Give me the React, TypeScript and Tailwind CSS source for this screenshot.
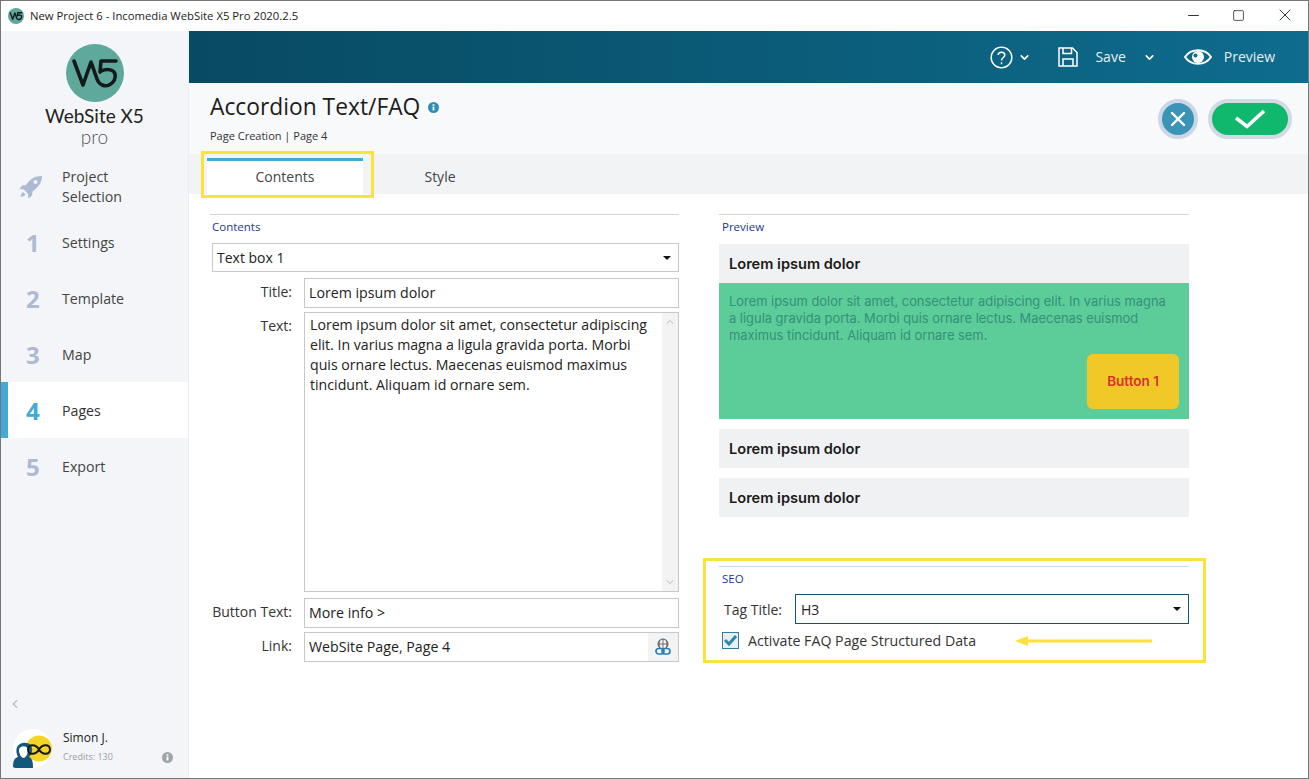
import { ChevronDown, ChevronLeft, ChevronUp, Minus, Square, X } from 'lucide-react';

const sans = "font-['Open_Sans','Noto_Sans',sans-serif]";

const steps = [
  { num: '1', label: 'Settings' },
  { num: '2', label: 'Template' },
  { num: '3', label: 'Map' },
  { num: '4', label: 'Pages', active: true },
  { num: '5', label: 'Export' },
];

const loremText =
  'Lorem ipsum dolor sit amet, consectetur adipiscing elit. In varius magna a ligula gravida porta. Morbi quis ornare lectus. Maecenas euismod maximus tincidunt. Aliquam id ornare sem.';

function LogoMark({ size, stroke }: { size: number; stroke: number }) {
  return (
    <svg width={size} height={size} viewBox="0 0 58 58">
      <circle cx="29" cy="29" r="29" fill="#5fa89c" />
      <path
        d="M8 17 L17 41 L25 18 L31 35 C33 41 39 43 43 41 C48 39 50 34 49 30 C48 26 42 24 35 27 L34 28 L35 17 L50 17"
        fill="none"
        stroke="#14191c"
        strokeWidth={stroke}
        strokeLinecap="round"
        strokeLinejoin="round"
      />
    </svg>
  );
}

function Avatar() {
  return (
    <svg width="39" height="39" viewBox="0 0 39 39">
      <circle cx="19.5" cy="19.5" r="19.5" fill="#ffffff" />
      <circle cx="26" cy="19.5" r="13" fill="#f5d327" />
      <path d="M0 38 C0 31 2 29 5 28 C2 22 3 15 10 14 C16 13 20 17 19 22 C19 25 17 27 16 28 C19 29 20 32 20 39 L2 39 Z" fill="#13577c" />
      <path d="M6 21 C6 16 15 16 15 21 C15 26 12 29 10.5 29 C9 29 6 26 6 21 Z" fill="#ffffff" />
      <path
        d="M26 20.5 C23 15 15 14.5 15 20.5 C15 26.5 23 26 26 20.5 C29 15 37 14.5 37 20.5 C37 26.5 29 26 26 20.5 Z"
        fill="none"
        stroke="#14191c"
        strokeWidth="2"
      />
    </svg>
  );
}

function Rocket() {
  return (
    <svg width="24" height="24" viewBox="0 0 24 24">
      <path d="M23 1 C16 1 11 4 7 10 L3 10.5 L0.5 14 L5 14.5 L9 19 L9.5 23.5 L13 20.5 L13.5 16.5 C20 12 23 7 23 1 Z" fill="#aeb9d4" />
      <circle cx="16.5" cy="7" r="2" fill="#f3f5f8" />
      <path d="M4 17 C2.5 18 2 20 1.5 22 C3.5 21.5 5.5 21 6.5 19.5 Z" fill="#aeb9d4" />
    </svg>
  );
}

function InfoDot({ size, color }: { size: number; color: string }) {
  return (
    <svg width={size} height={size} viewBox="0 0 12 12">
      <circle cx="6" cy="6" r="6" fill={color} />
      <rect x="5" y="5" width="2" height="4.2" fill="#ffffff" />
      <rect x="5" y="2.4" width="2" height="1.7" fill="#ffffff" />
    </svg>
  );
}

function Caret() {
  return <span className="h-0 w-0 border-x-[4px] border-t-[4px] border-x-transparent border-t-[#111]" />;
}

function FieldRow({ label, children }: { label: string; children: React.ReactNode }) {
  return (
    <div className="flex items-start">
      <div className="w-[82px] shrink-0 pt-[4px] text-right text-[14px] leading-[20px] text-[#333]">{label}</div>
      <div className="ml-[12px] flex-1">{children}</div>
    </div>
  );
}

function InputBox({ value, right }: { value: string; right?: React.ReactNode }) {
  return (
    <div className="flex h-[30px] items-center justify-between border border-[#c8c8c8] bg-white pl-[4px] text-[14.2px] text-[#222]">
      <span>{value}</span>
      {right}
    </div>
  );
}

function SectionTitle({ title, inset }: { title: string; inset?: boolean }) {
  return (
    <div className={`border-t border-[#d4d6dc] pt-[4px] text-[11.5px] leading-[16px] text-[#1b3a8a] ${inset ? 'pl-[3px]' : 'pl-[2px]'}`}>
      {title}
    </div>
  );
}

function AccordionHead() {
  return (
    <div className="flex h-[39px] items-center bg-[#f0f1f3] pl-[10px] pt-[2px] font-['Inter',sans-serif] text-[14.6px] font-semibold text-[#1a1a1a]">
      Lorem ipsum dolor
    </div>
  );
}

export default function App() {
  return (
    <div className={`${sans} flex h-[779px] w-[1309px] flex-col overflow-hidden border border-[#777] bg-white`}>
      {/* Title bar */}
      <div className="flex h-[30px] shrink-0 items-center bg-white pl-[7px] text-[11.3px] text-[#222]">
        <LogoMark size={16} stroke={5} />
        <span className="ml-[6px] flex-1">New Project 6 - Incomedia WebSite X5 Pro 2020.2.5</span>
        <div className="flex items-center gap-[30px] pb-[2px] pr-[13px] text-[#111]">
          <Minus size={17} strokeWidth={1.2} />
          <Square size={13} strokeWidth={1.3} />
          <X size={20} strokeWidth={1} />
        </div>
      </div>

      <div className="flex min-h-0 flex-1">
        {/* Sidebar */}
        <aside className="flex w-[188px] shrink-0 flex-col border-r border-[#e8eef2] bg-[#f3f5f8]">
          <div className="flex flex-col items-center pt-[13px]">
            <LogoMark size={58} stroke={3.6} />
            <div className="mt-[4px] font-['Lato',sans-serif] text-[19px] leading-[20px] text-[#222]">WebSite X5</div>
            <div className="mt-[2px] font-['Lato',sans-serif] text-[19px] font-light leading-[18px] text-[#555]">pro</div>
          </div>
          <div className="mt-[13px] flex h-[55px] items-center pl-[18px] pt-[1px]">
            <Rocket />
            <div className="ml-[19px] text-[14.2px] leading-[20px] text-[#444]">
              Project
              <br />
              Selection
            </div>
          </div>
          {steps.map(step => (
            <div
              key={step.num}
              className={`flex h-[56px] items-center pt-[2px] ${step.active ? 'border-l-[7px] border-[#43a9d6] bg-white pl-[18px]' : 'pl-[25px]'}`}
            >
              <span className={`w-[36px] text-[24px] font-bold ${step.active ? 'text-[#43a9d6]' : 'text-[#aeb9d4]'}`}>{step.num}</span>
              <span className={`text-[14.2px] ${step.active ? 'font-medium text-[#333]' : 'text-[#444]'}`}>{step.label}</span>
            </div>
          ))}
          <div className="mt-auto pl-[7px]">
            <ChevronLeft size={14} className="text-[#b4b8bd]" />
          </div>
          <div className="flex items-start pb-[10px] pl-[12px] pr-[15px] pt-[18px]">
            <Avatar />
            <div className="ml-[11px] flex-1 pt-[1px]">
              <div className="text-[12px] font-medium leading-[16px] text-[#222]">Simon J.</div>
              <div className="mt-[4px] flex items-center justify-between text-[9px] leading-[14px] text-[#9aa0a6]">
                Credits: 130
                <InfoDot size={11} color="#9ea5ab" />
              </div>
            </div>
          </div>
        </aside>

        <main className="flex min-w-0 flex-1 flex-col">
          {/* Top bar */}
          <div className="flex h-[52px] shrink-0 items-center justify-end bg-gradient-to-r from-[#084a62] to-[#0e6c8e] pr-[33px] text-[14px] text-[#e6f0f4]">
            <svg width="23" height="23" viewBox="0 0 24 24" fill="none" stroke="#fff" strokeWidth="1.5">
              <circle cx="12" cy="12" r="10.8" />
              <path d="M8.5 9.5 C8.5 5.5 15.5 5.5 15.5 9.5 C15.5 12 12 12 12 15" />
              <path d="M12 17 V19" />
            </svg>
            <ChevronDown size={13} strokeWidth={3} className="ml-[5px] text-white" />
            <svg className="ml-[27px]" width="20" height="20" viewBox="0 0 20 20" fill="none" stroke="#fff" strokeWidth="1.5">
              <path d="M1 1 H14.5 L19 5.5 V19 H1 Z" />
              <path d="M5 1 V6.5 H13.5 V1" />
              <path d="M5 19 V12 H15 V19" />
            </svg>
            <span className="ml-[17px] pb-[2px]">Save</span>
            <ChevronDown size={13} strokeWidth={3} className="ml-[17px] text-white" />
            <svg className="ml-[28px]" width="28" height="18" viewBox="0 0 28 18">
              <path d="M1 9 C7 0 21 0 27 9 C21 18 7 18 1 9 Z" fill="none" stroke="#fff" strokeWidth="2" />
              <circle cx="14" cy="9" r="6" fill="#fff" />
              <circle cx="11.5" cy="7.5" r="2" fill="#0e6c8e" />
            </svg>
            <span className="ml-[12px] pb-[2px]">Preview</span>
          </div>

          {/* Page header */}
          <div className="flex h-[71px] shrink-0 items-start justify-between bg-[#f8f9fb] pl-[21px] pr-[16px]">
            <div>
              <div className="flex items-center pt-[9px]">
                <h1 className="text-[22.8px] leading-[30px] text-[#1c1c1c]">Accordion Text/FAQ</h1>
                <span className="ml-[8px]">
                  <InfoDot size={11} color="#2f8fb0" />
                </span>
              </div>
              <div className="mt-[6px] text-[11px] leading-[16px] text-[#333]">Page Creation | Page 4</div>
            </div>
            <div className="flex items-center gap-[10px] pt-[16px]">
              <div className="flex h-[40px] w-[40px] items-center justify-center rounded-full border-[4px] border-[#ccd6e6] bg-[#3a94b6]">
                <X size={24} strokeWidth={2.4} className="text-white" />
              </div>
              <div className="flex h-[40px] w-[84px] items-center justify-center rounded-full border-[4px] border-[#d4d9e6] bg-[#0fb86c]">
                <svg width="30" height="20" viewBox="0 0 30 20" fill="none" stroke="#fff" strokeWidth="3.6">
                  <path d="M1 9 L12 17.5 L29 2" />
                </svg>
              </div>
            </div>
          </div>

          {/* Tabs */}
          <div className="relative flex h-[40px] shrink-0 bg-[#f1f3f5] pl-[18px] text-[14px] text-[#444]">
            <div className="mt-[4px] flex w-[156px] items-center justify-center border-t-[3px] border-[#3facd8] bg-white pb-[2px]">Contents</div>
            <div className="mt-[4px] flex w-[154px] items-center justify-center border-t-[3px] border-transparent pb-[2px]">Style</div>
            <div className="absolute left-[12px] top-[-3px] h-[47px] w-[173px] border-[3px] border-[#fce23d]" />
          </div>

          <div className="flex flex-1 pl-[21px] pt-[20px]">
            {/* Left column */}
            <section className="w-[469px]">
              <SectionTitle title="Contents" />
              <div className="ml-[2px] mt-[8px] flex h-[29px] items-center justify-between border border-[#c8c8c8] pl-[4px] pr-[7px] text-[14px] text-[#222]">
                Text box 1
                <Caret />
              </div>
              <div className="mt-[6px] flex flex-col gap-[4px]">
                <FieldRow label="Title:">
                  <InputBox value="Lorem ipsum dolor" />
                </FieldRow>
                <FieldRow label="Text:">
                  <div className="flex h-[280px] border border-[#c8c8c8] bg-white">
                    <div className="flex-1 py-[2px] pl-[5px] pr-[10px] text-[14.15px] leading-[20px] text-[#222]">{loremText}</div>
                    <div className="flex w-[16px] flex-col items-center justify-between bg-[#f3f3f3] py-[3px] text-[#b5b5b5]">
                      <ChevronUp size={12} />
                      <ChevronDown size={12} />
                    </div>
                  </div>
                </FieldRow>
                <div className="mt-[2px]">
                  <FieldRow label="Button Text:">
                    <InputBox value="More info >" />
                  </FieldRow>
                </div>
                <FieldRow label="Link:">
                  <InputBox
                    value="WebSite Page, Page 4"
                    right={
                      <span className="flex h-[28px] w-[30px] items-center justify-center bg-[#f1f3f5]">
                        <svg width="16" height="18" viewBox="0 0 16 18" fill="none">
                          <circle cx="8" cy="6" r="5" stroke="#555" strokeWidth="1" />
                          <path d="M3 6 H13 M8 1 V11 M5 2 C4 5 4 8 5 11 M11 2 C12 5 12 8 11 11" stroke="#555" strokeWidth="0.8" />
                          <rect x="1" y="10.5" width="8" height="5.5" rx="2.7" stroke="#2b7db5" strokeWidth="1.7" fill="#f1f3f5" />
                          <rect x="7" y="10.5" width="8" height="5.5" rx="2.7" stroke="#2b7db5" strokeWidth="1.7" />
                        </svg>
                      </span>
                    }
                  />
                </FieldRow>
              </div>
            </section>

            {/* Right column */}
            <section className="ml-[40px] w-[470px]">
              <SectionTitle title="Preview" inset />
              <div className="mt-[9px]">
                <AccordionHead />
                <div className="flex h-[136px] flex-col bg-[#5ccc98] pb-[10px] pl-[10px] pr-[10px] pt-[10px] font-['Inter',sans-serif] text-[12.9px] leading-[17px] text-[#35917a]">
                  <p className="pr-[5px]">{loremText}</p>
                  <div className="mt-auto flex h-[55px] w-[92px] items-center justify-center self-end rounded-[6px] bg-[#f0c929] text-[13.5px] font-semibold text-[#d9302c]">
                    Button 1
                  </div>
                </div>
                <div className="mt-[10px]">
                  <AccordionHead />
                </div>
                <div className="mt-[10px]">
                  <AccordionHead />
                </div>
              </div>
              {/* SEO */}
              <div className="-ml-[16px] -mr-[17px] mt-[41px] h-[105px] border-[3px] border-[#fce23d] pl-[13px] pr-[14px] pt-[5px]">
                <SectionTitle title="SEO" inset />
                <div className="mt-[7px] flex items-center">
                  <span className="w-[76px] pl-[5px] text-[14px] text-[#333]">Tag Title:</span>
                  <div className="flex h-[30px] flex-1 items-center justify-between border border-[#17566e] pl-[5px] pr-[7px] text-[14px] text-[#222]">
                    H3
                    <Caret />
                  </div>
                </div>
                <div className="relative mt-[6px] flex items-center pl-[3px] text-[14.2px] text-[#333]">
                  <span className="flex h-[17px] w-[17px] items-center justify-center border border-[#2e7d9c] bg-[#e8eef2]">
                    <svg width="13" height="11" viewBox="0 0 13 11" fill="none" stroke="#2e86ab" strokeWidth="3">
                      <path d="M1 5 L5 9 L12 1" />
                    </svg>
                  </span>
                  <span className="ml-[9px]">Activate FAQ Page Structured Data</span>
                  <svg className="absolute left-[296px] top-[5px]" width="137" height="12" viewBox="0 0 137 12">
                    <path d="M0 6 L13 1 V4.5 H137 V7.5 H13 V11 Z" fill="#fce23d" />
                  </svg>
                </div>
              </div>
            </section>
          </div>
        </main>
      </div>
    </div>
  );
}
